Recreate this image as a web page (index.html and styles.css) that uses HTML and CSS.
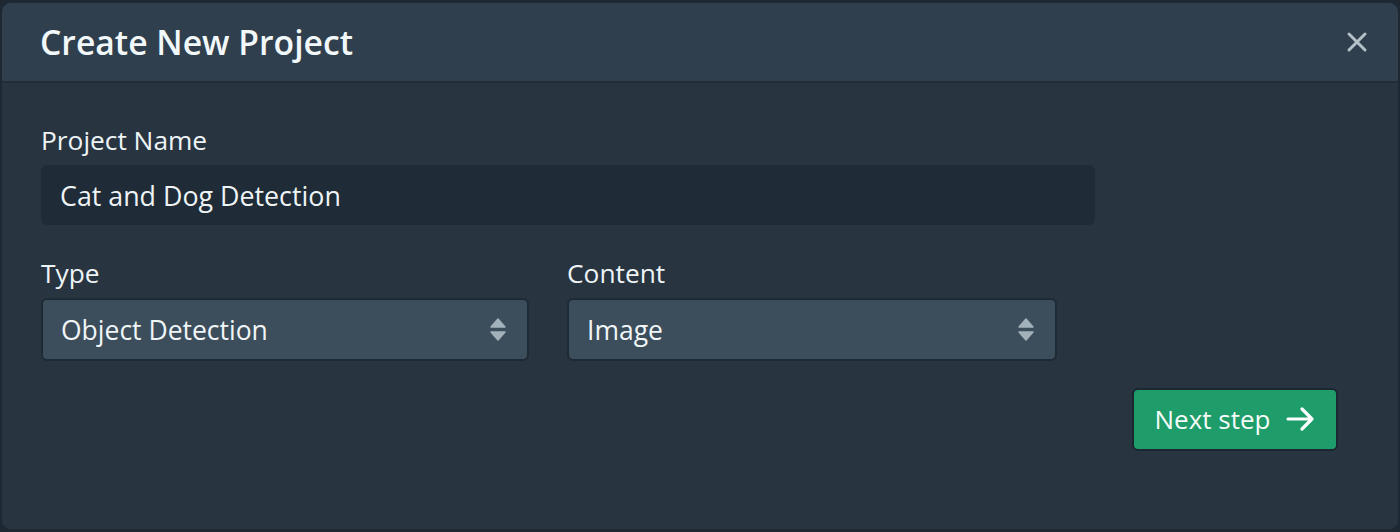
FILE: index.html
```html
<!DOCTYPE html>
<html lang="en">
<head>
<meta charset="utf-8">
<title>Create New Project</title>
<link rel="stylesheet" href="styles.css">
</head>
<body>
<div class="modal">
  <div class="modal-header">
    <h1 class="modal-title">Create New Project</h1>
    <button class="close-btn" aria-label="Close">
      <svg width="22" height="22" viewBox="0 0 22 22"><path d="M3 3 L19 19 M19 3 L3 19" stroke="#b4c1c8" stroke-width="3" stroke-linecap="round"/></svg>
    </button>
  </div>
  <div class="modal-body">
    <div class="field">
      <label class="label">Project Name</label>
      <div class="input">Cat and Dog Detection</div>
    </div>
    <div class="row">
      <div class="field col">
        <label class="label">Type</label>
        <div class="select">
          <span>Object Detection</span>
          <svg class="updown" width="18" height="26" viewBox="0 0 18 26"><path d="M9 2 L16 10 L2 10 Z M2 15 L16 15 L9 23 Z" fill="#a3b2ba" stroke="#a3b2ba" stroke-width="1.5" stroke-linejoin="round"/></svg>
        </div>
      </div>
      <div class="field col">
        <label class="label">Content</label>
        <div class="select">
          <span>Image</span>
          <svg class="updown" width="18" height="26" viewBox="0 0 18 26"><path d="M9 2 L16 10 L2 10 Z M2 15 L16 15 L9 23 Z" fill="#a3b2ba" stroke="#a3b2ba" stroke-width="1.5" stroke-linejoin="round"/></svg>
        </div>
      </div>
    </div>
    <div class="actions">
      <button class="btn-next">Next step
        <svg width="30" height="26" viewBox="0 0 30 26"><path d="M3 13 H27 M17 3 L27 13 L17 23" stroke="#ffffff" stroke-width="3.2" fill="none" stroke-linecap="round" stroke-linejoin="round"/></svg>
      </button>
    </div>
  </div>
</div>
</body>
</html>
```

FILE: styles.css
```css
html, body {
  margin: 0;
  padding: 0;
  background: #1d2832;
}
body {
  font-family: "Open Sans", "Noto Sans", sans-serif;
  color: #eef4f6;
  padding: 2px 1px;
  height: 532px;
  box-sizing: border-box;
}
.modal {
  background: #283541;
  border: 1px solid #1f2a34;
  border-radius: 10px;
  height: 528px;
  box-sizing: border-box;
  overflow: hidden;
}
.modal-header {
  background: #303f4d;
  height: 80px;
  border-bottom: 2px solid #212d38;
  box-sizing: border-box;
  display: flex;
  align-items: center;
  justify-content: space-between;
  padding: 0 30px 0 38px;
}
.modal-title {
  margin: 0;
  font-size: 33.7px;
  line-height: 40px;
  font-weight: 600;
  color: #f2f8fa;
}
.close-btn {
  background: none;
  border: none;
  padding: 0;
  width: 22px;
  height: 22px;
  display: flex;
  cursor: pointer;
}
.modal-body {
  padding: 39px 40px 0 39px;
}
.field {
  display: flex;
  flex-direction: column;
}
.label {
  font-size: 26.3px;
  line-height: 36px;
  color: #eef4f6;
  margin-bottom: 7px;
}
.input {
  width: 1054px;
  height: 60px;
  box-sizing: border-box;
  background: #1f2b36;
  border-radius: 6px;
  padding: 0 19px;
  display: flex;
  align-items: center;
  font-size: 26.8px;
  color: #eef4f6;
}
.row {
  display: flex;
  gap: 38px;
  margin-top: 30px;
}
.col {
  width: 488px;
}
.col + .col {
  width: 490px;
}
.select {
  height: 63px;
  box-sizing: border-box;
  background: #3c4d5b;
  border: 2px solid #1e2a34;
  border-radius: 6px;
  display: flex;
  align-items: center;
  justify-content: space-between;
  padding: 0 20px 0 18px;
  font-size: 26.5px;
  color: #f0f5f7;
}
.updown {
  display: block;
}
.actions {
  display: flex;
  justify-content: flex-end;
  padding-right: 20px;
  margin-top: 27px;
}
.btn-next {
  width: 206px;
  height: 63px;
  box-sizing: border-box;
  background: #1e9d6a;
  border: 2px solid #1b2731;
  border-radius: 6px;
  color: #f4fbf8;
  font-family: "Open Sans", "Noto Sans", sans-serif;
  font-size: 26px;
  display: flex;
  align-items: center;
  justify-content: center;
  gap: 15px;
  padding: 0 0 2px 0;
  cursor: pointer;
}
.btn-next svg {
  display: block;
}
```
